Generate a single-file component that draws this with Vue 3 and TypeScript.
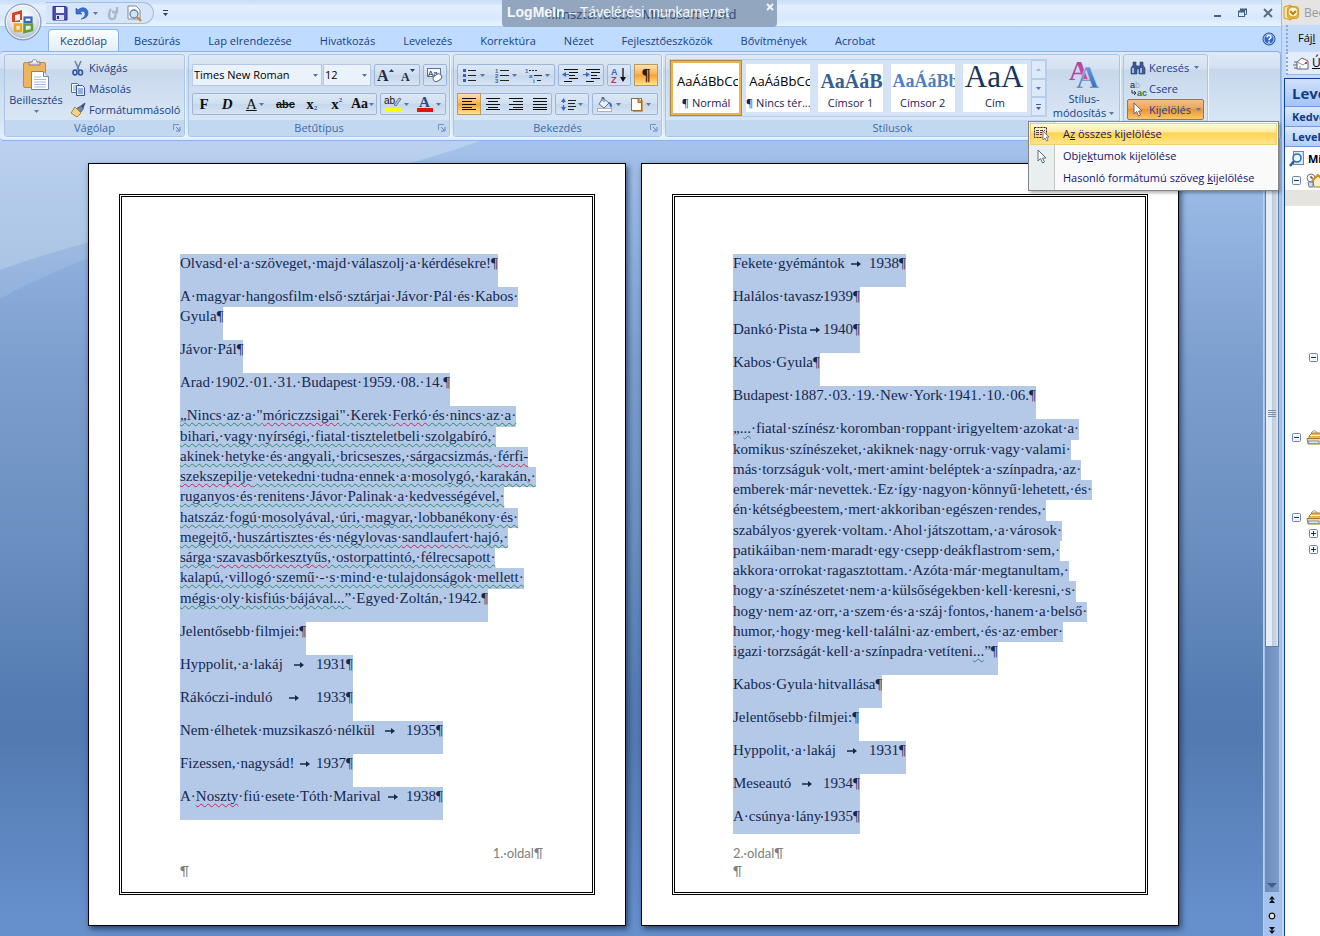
<script setup lang="ts">
import { h, ref } from 'vue'

interface Icon { w: number; h: number; body: string }

const navy = '#1e3f7a'
const serif = 'font-family="Liberation Serif" font-weight="bold"'
const sans = 'font-family="Liberation Sans"'

const icons: Record<string, Icon> = {
  office: { w: 38, h: 38, body: `<defs><radialGradient id="orb" cx=".5" cy=".35" r=".65"><stop offset="0" stop-color="#fff"/><stop offset=".6" stop-color="#dfe5ee"/><stop offset="1" stop-color="#a3b4cc"/></radialGradient></defs>
<circle cx="19" cy="19" r="18" fill="url(#orb)" stroke="#7f94b4"/><circle cx="19" cy="19" r="16.5" fill="none" stroke="#fff" stroke-opacity=".8"/>
<path d="M8 10 L18 7 V17 H16 V11 L11 12 V18 L16 17 V19 H8 Z" fill="#d5441c"/>
<rect x="20.5" y="14.5" width="7" height="4.500" fill="none" stroke="#2f6cc0" stroke-width="2.200"/>
<rect x="11" y="21.500" width="6" height="6.500" fill="none" stroke="#f0a820" stroke-width="2.600"/>
<path d="M20.500 21.500 H28 V27 L20.500 29 Z" fill="none" stroke="#5fa02e" stroke-width="2.600"/>` },
  save: { w: 16, h: 16, body: `<path d="M1 1.500h13l1 1V15H1z" fill="#4a4fb0" stroke="#2b2f86"/><rect x="4" y="2" width="8" height="6" fill="#eef2fb"/><rect x="4" y="10" width="8" height="5" fill="#d5dcec"/><rect x="5" y="11" width="2" height="3" fill="#2b2f86"/>` },
  undo: { w: 15, h: 15, body: `<path d="M2 2v6h6L6 6c3-2 6 0 5 3-.5 2-2 3-4 4 4-.5 7-2 7-6C14 2 8 0 4 4z" fill="#3c6fd0" stroke="#2450a8" stroke-width=".6"/>` },
  redo: { w: 15, h: 15, body: `<path d="M12 1v5H7M11 6l-1 6c-2 2-6 1-6-2 0-3 0-5 2-7" fill="none" stroke="#a9b8cc" stroke-width="2.400"/>` },
  preview: { w: 17, h: 17, body: `<path d="M2 1h8l4 4v9H2z" fill="#fff" stroke="#7d8ba3"/><circle cx="8" cy="9" r="4" fill="#cfe6f7" stroke="#6b7f99" stroke-width="1.300"/><path d="M11 12l4 4" stroke="#c98a3c" stroke-width="2.400"/>` },
  more: { w: 7, h: 8, body: `<path d="M1 1.500h5" stroke="${navy}"/><path d="M1 4h5L3.500 7z" fill="${navy}"/>` },
  caret: { w: 7, h: 5, body: `<path d="M1 1h5L3.500 4z" fill="#5b77a5"/>` },
  caretUp: { w: 7, h: 5, body: `<path d="M1 4h5L3.500 1z" fill="#a9b6cb"/>` },
  minimize: { w: 12, h: 12, body: `<path d="M2 9h7" stroke="#44617f" stroke-width="2"/>` },
  restore: { w: 12, h: 12, body: `<path d="M3.500 4V2.500h6v5H8" fill="none" stroke="#44617f"/><rect x="1.500" y="4.500" width="6" height="5" fill="none" stroke="#44617f"/><path d="M1 4.500h7M3 2.500h7" stroke="#44617f" stroke-width="2"/>` },
  close: { w: 12, h: 12, body: `<path d="M2 2l8 8M10 2l-8 8" stroke="#5a7089" stroke-width="2"/>` },
  smallClose: { w: 10, h: 10, body: `<path d="M2 2l6 6M8 2l-6 6" stroke="#eef3f8" stroke-width="2"/>` },
  help: { w: 14, h: 14, body: `<circle cx="7" cy="7" r="6" fill="#2f66cc" stroke="#1d4396"/><circle cx="7" cy="7" r="5" fill="none" stroke="#b9d2fb"/><path d="M5 5.500c0-2.500 4-2.500 4-.3C9 6.500 7 6.500 7 8.200M7 9.500v1.400" fill="none" stroke="#fff" stroke-width="1.500"/>` },
  paste: { w: 28, h: 32, body: `<rect x="1.500" y="3.500" width="22" height="25" rx="1.500" fill="#eeb55b" stroke="#c58a32"/><path d="M7 6V3h3c0-3 5-3 5 0h3v3z" fill="#d9dde4" stroke="#777f8c"/><rect x="11" y="1.500" width="3" height="2" fill="#fff"/><path d="M9.500 12.500h12l5 5V30.500h-17z" fill="#fff" stroke="#6f87b0"/><path d="M21.500 12.500v5h5" fill="#dbe6f6" stroke="#6f87b0"/><path d="M12 18h7M12 20.500h12M12 23h12M12 25.500h12M12 28h12" stroke="#a7bddd"/>` },
  cut: { w: 14, h: 16, body: `<path d="M4 1l4 9M10 1L6 10" stroke="#6d83a4" stroke-width="1.600"/><ellipse cx="4" cy="12.500" rx="2" ry="2.500" fill="none" stroke="#2c56a6" stroke-width="1.600"/><ellipse cx="9.500" cy="12.500" rx="2" ry="2.500" fill="none" stroke="#2c56a6" stroke-width="1.600"/>` },
  copy: { w: 16, h: 14, body: `<path d="M1.500 1.500h6l2 2v7h-8z" fill="#fff" stroke="#4c6fae"/><path d="M3 4h4M3 6h4M3 8h4" stroke="#7e9bd0"/><path d="M6.500 3.500h6l2 2v8h-8z" fill="#eaf2ff" stroke="#2f56a0"/><path d="M8 7h5M8 9h5M8 11h5" stroke="#4470c0"/>` },
  brush: { w: 16, h: 16, body: `<path d="M15 1l-4 3 2 2z" fill="#2c4f96" stroke="#2c4f96"/><path d="M11 4l2.500 2.500L10 11 6 7z" fill="#7b87a8" stroke="#46557d"/><path d="M5 5l6 6-4 4-6-4z" fill="#f3d487" stroke="#a8853d"/>` },
  grow: { w: 18, h: 16, body: `<text x="0" y="14" font-size="16" ${serif} fill="#222b3d">A</text><path d="M12 5h5L14.500 2z" fill="${navy}"/>` },
  shrink: { w: 18, h: 16, body: `<text x="2" y="14" font-size="12" ${serif} fill="#222b3d">A</text><path d="M11 2h5L13.500 5z" fill="${navy}"/>` },
  clear: { w: 18, h: 16, body: `<rect x="1.500" y="1.500" width="13" height="8" fill="#f4f7fc" stroke="#5c7299"/><text x="2" y="8.500" font-size="8" ${sans} fill="#223">Aa</text><rect x="7" y="8" width="9" height="6" rx="3" transform="rotate(-35 11 11)" fill="#fff" stroke="#65728a"/>` },
  highlight: { w: 18, h: 18, body: `<text x="0" y="9" font-size="10" ${sans} fill="#111">ab</text><path d="M15 3l2 1-5 7-2-1z" fill="#b7c2d6" stroke="#55627c" stroke-width=".8"/><rect x="1" y="13" width="16" height="4" fill="#ff0"/>` },
  fontColor: { w: 18, h: 18, body: `<text x="3" y="12" font-size="15" ${serif} fill="#2c4a86">A</text><rect x="1" y="13" width="16" height="4" fill="#e80f0f"/>` },
  bullets: { w: 16, h: 14, body: `<g fill="#3a5fb0"><rect x="1" y="1" width="3" height="3"/><rect x="1" y="6" width="3" height="3"/><rect x="1" y="11" width="3" height="3"/></g><path d="M6 2.500h8M6 7.500h8M6 12.500h8" stroke="#222"/>` },
  numbers: { w: 16, h: 15, body: `<g font-size="6" ${sans} font-weight="bold" fill="#3a5fb0"><text x="1" y="5">1</text><text x="1" y="10">2</text><text x="1" y="15">3</text></g><path d="M6 2.500h9M6 7.500h9M6 12.500h9" stroke="#222"/>` },
  multi: { w: 18, h: 15, body: `<g font-size="6" ${sans} font-weight="bold" fill="#3a5fb0"><text x="0" y="5">1</text><text x="4" y="10">a</text><text x="8" y="15">i</text></g><path d="M4 2.500h9" stroke="#222" stroke-dasharray="2 1"/><path d="M9 7.500h8M12 12.500h4" stroke="#222"/>` },
  outdent: { w: 18, h: 14, body: `<path d="M3 1.500h14M8 4.500h9M8 7.500h6M8 10.500h9M3 13.500h8" stroke="#111"/><path d="M5 4v5L1 6.500z" fill="#3a66c4"/><path d="M4 6.500h4" stroke="#3a66c4"/>` },
  indent: { w: 18, h: 14, body: `<path d="M3 1.500h14M8 4.500h9M8 7.500h6M8 10.500h9M3 13.500h8" stroke="#111"/><path d="M3 4v5l4-2.500z" fill="#3a66c4"/><path d="M0 6.500h4" stroke="#3a66c4"/>` },
  sort: { w: 18, h: 16, body: `<text x="1" y="8" font-size="9" ${sans} font-weight="bold" fill="#3a66b8">A</text><text x="1" y="16" font-size="9" ${sans} font-weight="bold" fill="#b03a4a">Z</text><path d="M13 1v11" stroke="#111" stroke-width="1.300"/><path d="M10 10h6l-3 5z" fill="#111"/>` },
  left: { w: 16, h: 14, body: `<path d="M1 1.500h14M1 4.500h10M1 7.500h14M1 10.500h10" stroke="#111"/><path d="M1 12.500h14" stroke="#111"/>` },
  center: { w: 16, h: 14, body: `<path d="M1 1.500h14M3 4.500h10M1 7.500h14M3 10.500h10M1 12.500h14" stroke="#111"/>` },
  right: { w: 16, h: 14, body: `<path d="M1 1.500h14M5 4.500h10M1 7.500h14M5 10.500h10M1 12.500h14" stroke="#111"/>` },
  justify: { w: 16, h: 14, body: `<path d="M1 1.500h14M1 4.500h14M1 7.500h14M1 10.500h14M1 12.500h14" stroke="#111"/>` },
  spacing: { w: 16, h: 15, body: `<path d="M3.500 3v9" stroke="#3a66c4" stroke-width="1.200" stroke-dasharray="3 2"/><path d="M1 5l2.500-4L6 5zM1 10l2.500 4L6 10z" fill="#3a66c4"/><path d="M8 3.500h8M8 6.500h7M8 9.500h8M8 12.500h6" stroke="#222"/>` },
  bucket: { w: 18, h: 16, body: `<path d="M7 2l6 5-5 5-5-4z" fill="#e9f0fa" stroke="#5b6f90"/><path d="M6 5V1.500h2V6" fill="none" stroke="#5b6f90"/><path d="M13 6c3 1 3 3 2.500 6-1.500-1-2-3-2.500-6" fill="#2f62bd"/><rect x="1.500" y="12.500" width="14" height="3" fill="#fff" stroke="#b9aeb5"/>` },
  borders: { w: 14, h: 15, body: `<rect x="1.500" y="1.500" width="10" height="12" fill="#fffdf8" stroke="#9a6a33"/><path d="M8 1.500l4 4h-4z" fill="#e8b76f" stroke="#9a6a33"/><path d="M12.500 3v11.500H3" fill="none" stroke="#d9963f"/>` },
  galleryMore: { w: 7, h: 8, body: `<path d="M1 1.500h5" stroke="#3f5f94"/><path d="M1 4h5L3.500 7z" fill="#3f5f94"/>` },
  changeStyles: { w: 34, h: 32, body: `<defs><linearGradient id="sa" x1="0" y1="0" x2="1" y2="1"><stop offset="0" stop-color="#8b3fb4"/><stop offset="1" stop-color="#ef4e8d"/></linearGradient><linearGradient id="sb" x1="0" y1="0" x2="0" y2="1"><stop offset="0" stop-color="#76a5e6"/><stop offset="1" stop-color="#2e62b4"/></linearGradient></defs><text x="2" y="20" font-size="28" ${serif} fill="url(#sa)">A</text><text x="9" y="28" font-size="32" ${serif} fill="url(#sb)" stroke="#dfeaf8" stroke-width=".4">A</text>` },
  find: { w: 16, h: 14, body: `<g fill="#3f5b93" stroke="#24407a" stroke-width=".6"><path d="M3 1h3v3l1 2v7H1V7l2-3z"/><path d="M10 1h3v3l2 3v6H9V6l1-2z"/><rect x="6" y="5" width="4" height="3"/></g><path d="M3 7v5M11 7v5" stroke="#dce8fb" stroke-width="1.300"/>` },
  replace: { w: 17, h: 16, body: `<text x="0" y="7" font-size="9" ${sans} fill="#111">a</text><text x="5" y="7" font-size="9" ${sans} fill="#9aa7bb">b</text><text x="7" y="15" font-size="9" ${sans} font-weight="bold" fill="#2c7a32">ac</text><path d="M2 9v3h3M4 10l2 2-2 2" fill="none" stroke="#333"/>` },
  pointer: { w: 12, h: 15, body: `<path d="M2 1v11l2.600-2.500L6.500 14l2-1-2-4H10z" fill="#fff" stroke="#5a6a88"/>` },
  selectAll: { w: 18, h: 16, body: `<rect x="1.500" y="1.500" width="12" height="10" fill="none" stroke="#222" stroke-dasharray="2 1"/><path d="M3 4.500h9M3 6.500h6M3 8.500h6" stroke="#444" stroke-dasharray="3 1"/><path d="M10 5v9l2-2 1.500 3 1.500-.6L13.500 11H16z" fill="#fff" stroke="#5a6a88" stroke-width=".8"/>` },
  launcher: { w: 9, h: 9, body: `<path d="M1.500 7V1.500H7" fill="none" stroke="#6f93c5"/><path d="M4 4l3 3M8 4v4H4" fill="none" stroke="#5f83b8"/>` },
  browseUp: { w: 8, h: 8, body: `<path d="M4 0L1 3.500h6zM4 3.500L1 7h6z" fill="#111"/>` },
  browseDown: { w: 8, h: 8, body: `<path d="M4 8L1 4.500h6zM4 4.500L1 1h6z" fill="#111"/>` },
  browse: { w: 8, h: 8, body: `<circle cx="4" cy="4" r="2.800" fill="#e8e6cf" stroke="#111" stroke-width="1.200"/>` },
  grip: { w: 9, h: 7, body: `<path d="M0 .5h8M0 2.500h8M0 4.500h8M0 6.500h8" stroke="#7b90b2"/>` },
  scrollDown: { w: 10, h: 6, body: `<path d="M0 0h10L5 5z" fill="#3d5f92"/>` },
  outlook: { w: 17, h: 17, body: `<path d="M1 3L8 1v15l-7-2z" fill="#fbe3a6" stroke="#d8962e"/><rect x="4.500" y="2.500" width="11" height="12" rx="3" fill="#f0b93c" stroke="#cf9a2c"/><circle cx="10" cy="8" r="5" fill="#fff4d2" stroke="#d59a26"/><path d="M7 7l3 3 3-3" fill="none" stroke="#c47c14" stroke-width="2"/>` },
  mail: { w: 16, h: 15, body: `<path d="M4 6l5-4 6 3v8H4z" fill="#fff" stroke="#5c6270"/><path d="M4 6l6 3 5-4M7 10v3" fill="none" stroke="#8d93a0"/><path d="M1 6h3M0 9h4M1 12h3" stroke="#5c6270"/><rect x="12" y="6" width="2" height="2" fill="#d33"/>` },
  searchFolder: { w: 16, h: 16, body: `<rect x="4.500" y=".5" width="10" height="13" fill="#dcebfb" stroke="#6885b5"/><circle cx="8" cy="7" r="4" fill="#eaf8ff" stroke="#2d70b0" stroke-width="1.600"/><path d="M5 10l-4 5" stroke="#2d5a92" stroke-width="2.400"/>` },
  home: { w: 18, h: 15, body: `<circle cx="5" cy="5" r="4" fill="#f4f4f0" stroke="#777"/><path d="M5 3v2h2" stroke="#333" fill="none"/><path d="M7 8l5-5 5 5v6H8z" fill="#fff0c8" stroke="#a87b29"/><path d="M6 8l6-6 6 6" fill="none" stroke="#d98c1e" stroke-width="2"/><path d="M2 9h5v5H3z" fill="#cfdcf0" stroke="#6a7fa8"/>` },
  folders: { w: 17, h: 15, body: `<path d="M5 3c2-3 5-3 6 0" fill="none" stroke="#8a8f98"/><path d="M3 6l3-3h9l3 3v5H3z" fill="#e9b64c" stroke="#a67b35"/><path d="M4 5.500h12" stroke="#fff3c9"/><path d="M1 8.500h12l4-3v5l-3 3.500H2z" fill="#f6d88a" stroke="#a67b35"/><path d="M2 11h11v2.500H3z" fill="#dbe6f6" stroke="#7e94bd"/>` },
  minus: { w: 9, h: 9, body: `<rect x=".5" y=".5" width="8" height="8" rx="1" fill="#f2f6fb" stroke="#6c86b4"/><path d="M2 4.500h5" stroke="#234"/>` },
  plus: { w: 9, h: 9, body: `<rect x=".5" y=".5" width="8" height="8" rx="1" fill="#f2f6fb" stroke="#6c86b4"/><path d="M2 4.500h5M4.500 2v5" stroke="#234"/>` },
  tab: { w: 11, h: 8, body: `<path d="M0 4h7" stroke="#14284e" stroke-width="1.500"/><path d="M6 1l4 3-4 3z" fill="#14284e"/>` },
}

const Ico = (props: { n: string }) => {
  const i = icons[props.n]
  return h('svg', { width: i.w, height: i.h, viewBox: `0 0 ${i.w} ${i.h}`, 'aria-hidden': 'true', innerHTML: i.body, style: { display: 'block', flex: 'none' } })
}
Ico.props = ['n']

const tabs = ['Kezdőlap', 'Beszúrás', 'Lap elrendezése', 'Hivatkozás', 'Levelezés', 'Korrektúra', 'Nézet', 'Fejlesztőeszközök', 'Bővítmények', 'Acrobat']
const activeTab = ref('Kezdőlap')

const styles = [
  { sample: 'AaÁáBbCc', name: '¶ Normál', kind: 'body' },
  { sample: 'AaÁáBbCc', name: '¶ Nincs tér...', kind: 'body' },
  { sample: 'AaÁáBb', name: 'Címsor 1', kind: 'h1' },
  { sample: 'AaÁáBb', name: 'Címsor 2', kind: 'h2' },
  { sample: 'AaA', name: 'Cím', kind: 'title' },
]
const activeStyle = ref(0)

const fontName = ref('Times New Roman')
const fontSize = ref('12')

/* A line is plain text; ~g…~ marks a grammar squiggle, ~r…~ a spelling one. */
interface Para { lines?: string[]; name?: string; year?: string; stop?: 'near' | 'mid' | 'far'; clipped?: boolean }

const pages: { body: Para[]; footer: string; side: string }[] = [
  {
    side: 'end',
    footer: '1. oldal¶',
    body: [
      { lines: ['Olvasd el a szöveget, majd válaszolj a kérdésekre!¶'] },
      { lines: ['A magyar hangosfilm első sztárjai Jávor Pál és Kabos ', 'Gyula¶'] },
      { lines: ['Jávor Pál¶'] },
      { lines: ['Arad 1902. 01. 31. Budapest 1959. 08. 14.¶'] },
      {
        lines: [
          '~g„Nincs az a "~rmóriczzsigai~g" Kerek ~rFerkó~g és nincs az a ~',
          '~gbihari, vagy nyírségi, fiatal tiszteletbeli szolgabíró, ~',
          '~gakinek hetyke és angyali, bricseszes, sárgacsizmás, ~rférfi-~',
          '~rszekszepilje~g vetekedni tudna ennek a mosolygó, karakán, ~',
          '~gruganyos és renitens Jávor Palinak a kedvességével, ~',
          '~ghatszáz fogú mosolyával, úri, magyar, lobbanékony és ~',
          '~gmegejtő, huszártisztes és négylovas ~rsandlaufert~g hajó, ~',
          '~gsárga ~rszavasbőrkesztyűs~g, ostorpattintó, félrecsapott ~',
          '~gkalapú, villogó szemű - s mind e tulajdonságok mellett ~',
          '~gmégis oly kisfiús bájával...”~n Egyed Zoltán, 1942.¶',
        ],
      },
      { lines: ['Jelentősebb filmjei:¶'] },
      { name: 'Hyppolit, a lakáj', year: '1931¶', stop: 'mid' },
      { name: 'Rákóczi-induló', year: '1933¶', stop: 'mid' },
      { name: 'Nem élhetek muzsikaszó nélkül', year: '1935¶', stop: 'far' },
      { name: 'Fizessen, nagysád!', year: '1937¶', stop: 'mid' },
      { name: 'A ~rNoszty~n fiú esete Tóth Marival', year: '1938¶', stop: 'far' },
    ],
  },
  {
    side: 'start',
    footer: '2. oldal¶',
    body: [
      { name: 'Fekete gyémántok', year: '1938¶', stop: 'mid' },
      { name: 'Halálos tavasz', year: '1939¶', stop: 'near' },
      { name: 'Dankó Pista', year: '1940¶', stop: 'near' },
      { lines: ['Kabos Gyula¶'] },
      { lines: ['Budapest 1887. 03. 19. New York 1941. 10. 06.¶'] },
      {
        lines: [
          '„.~g..~n fiatal színész koromban roppant irigyeltem azokat a ',
          'komikus színészeket, akiknek nagy orruk vagy valami ',
          'más torzságuk volt, mert amint beléptek a színpadra, az ',
          'emberek már nevettek. Ez így nagyon könnyű lehetett, és ',
          'én kétségbeestem, mert akkoriban egészen rendes, ',
          'szabályos gyerek voltam. Ahol játszottam, a városok ',
          'patikáiban nem maradt egy csepp deákflastrom sem, ',
          'akkora orrokat ragasztottam. Azóta már megtanultam, ',
          'hogy a színészetet nem a külsőségekben kell keresni, s ',
          'hogy nem az orr, a szem és a száj fontos, hanem a belső ',
          'humor, hogy meg kell találni az embert, és az ember ',
          'igazi torzságát kell a színpadra vetíteni~g...~n”¶',
        ],
      },
      { lines: ['Kabos Gyula hitvallása¶'] },
      { lines: ['Jelentősebb filmjei:¶'] },
      { name: 'Hyppolit, a lakáj', year: '1931¶', stop: 'mid' },
      { name: 'Meseautó', year: '1934¶', stop: 'near' },
      { name: 'A csúnya lány', year: '1935¶', stop: 'near', clipped: true },
    ],
  },
]

function runs(line: string): { text: string; kind: string }[] {
  return line
    .split('~')
    .map((part, i) => (i === 0 ? { text: part, kind: 'n' } : { text: part.slice(1), kind: part.charAt(0) }))
    .filter((r) => r.text)
    .map((r) => ({ ...r, text: r.text.replace(/ /g, '·') }))
}
</script>

<template>
  <div class="desktop">
    <main class="word">
      <header class="titlebar">
        <button class="orb" aria-label="Office"><Ico n="office" /></button>
        <div class="quick">
          <button aria-label="Mentés"><Ico n="save" /></button>
          <button aria-label="Visszavonás"><Ico n="undo" /><Ico n="caret" /></button>
          <button aria-label="Ismétlés"><Ico n="redo" /></button>
          <button aria-label="Nyomtatási kép"><Ico n="preview" /></button>
        </div>
        <button class="quick-more" aria-label="Testreszabás"><Ico n="more" /></button>
        <div class="window-buttons">
          <button aria-label="Kis méret"><Ico n="minimize" /></button>
          <button aria-label="Előző méret"><Ico n="restore" /></button>
          <button aria-label="Bezárás"><Ico n="close" /></button>
        </div>
        <div class="remote">
          <span class="doc-title">filmsztár.docx - Microsoft Word</span>
          <span class="remote-title"><b>LogMeIn</b> – Távelérési munkamenet</span>
          <button class="remote-close" aria-label="Bezárás"><Ico n="smallClose" /></button>
        </div>
      </header>

      <nav class="tabs">
        <button v-for="t in tabs" :key="t" :class="['tab', { active: t === activeTab }]" @click="activeTab = t">{{ t }}</button>
        <button class="help" aria-label="Súgó"><Ico n="help" /></button>
      </nav>

      <section class="ribbon">
        <div class="group clip">
          <div class="content">
            <button class="big"><Ico n="paste" /><span>Beillesztés</span><Ico n="caret" /></button>
            <div class="stack">
              <button class="item"><i><Ico n="cut" /></i>Kivágás</button>
              <button class="item"><i><Ico n="copy" /></i>Másolás</button>
              <button class="item"><i><Ico n="brush" /></i>Formátummásoló</button>
            </div>
          </div>
          <footer class="label">Vágólap<button aria-label="Vágólap ablak"><Ico n="launcher" /></button></footer>
        </div>

        <div class="group font">
          <div class="content rows">
            <div class="row">
              <div class="combos">
                <label class="combo wide"><select v-model="fontName" aria-label="Betűtípus"><option>Times New Roman</option></select><Ico n="caret" /></label>
                <label class="combo"><select v-model="fontSize" aria-label="Betűméret"><option>12</option></select><Ico n="caret" /></label>
              </div>
              <div class="box fill"><button aria-label="Betűméret növelése"><Ico n="grow" /></button><button aria-label="Betűméret csökkentése"><Ico n="shrink" /></button></div>
              <div class="box"><button aria-label="Formázás törlése"><Ico n="clear" /></button></div>
            </div>
            <div class="row">
              <div class="box fill letters">
                <button><b>F</b></button><button><b><em>D</em></b></button><button class="drop"><u>A</u><Ico n="caret" /></button>
                <button class="strike"><s>abc</s></button><button class="x">x<sub>2</sub></button><button class="x">x<sup>2</sup></button>
                <button class="aa">Aa<Ico n="caret" /></button>
              </div>
              <div class="box">
                <button class="drop" aria-label="Kiemelés"><Ico n="highlight" /><Ico n="caret" /></button>
                <button class="drop" aria-label="Betűszín"><Ico n="fontColor" /><Ico n="caret" /></button>
              </div>
            </div>
          </div>
          <footer class="label">Betűtípus<button aria-label="Betűtípus ablak"><Ico n="launcher" /></button></footer>
        </div>

        <div class="group para">
          <div class="content rows">
            <div class="row">
              <div class="box fill">
                <button class="drop" aria-label="Felsorolás"><Ico n="bullets" /><Ico n="caret" /></button>
                <button class="drop" aria-label="Számozás"><Ico n="numbers" /><Ico n="caret" /></button>
                <button class="drop" aria-label="Többszintű lista"><Ico n="multi" /><Ico n="caret" /></button>
              </div>
              <div class="box"><button aria-label="Behúzás csökkentése"><Ico n="outdent" /></button><button aria-label="Behúzás növelése"><Ico n="indent" /></button></div>
              <div class="box"><button aria-label="Rendezés"><Ico n="sort" /></button></div>
              <div class="box"><button class="on pilcrow">¶</button></div>
            </div>
            <div class="row">
              <div class="box fill">
                <button class="on" aria-label="Balra"><Ico n="left" /></button><button aria-label="Középre"><Ico n="center" /></button>
                <button aria-label="Jobbra"><Ico n="right" /></button><button aria-label="Sorkizárt"><Ico n="justify" /></button>
              </div>
              <div class="box"><button class="drop" aria-label="Sorköz"><Ico n="spacing" /><Ico n="caret" /></button></div>
              <div class="box">
                <button class="drop" aria-label="Árnyékolás"><Ico n="bucket" /><Ico n="caret" /></button>
                <button class="drop" aria-label="Szegélyek"><Ico n="borders" /><Ico n="caret" /></button>
              </div>
            </div>
          </div>
          <footer class="label">Bekezdés<button aria-label="Bekezdés ablak"><Ico n="launcher" /></button></footer>
        </div>

        <div class="group styles">
          <div class="content">
            <div class="gallery">
              <button v-for="(s, i) in styles" :key="s.name" :class="['style', { chosen: i === activeStyle }]" @click="activeStyle = i">
                <span :class="['sample', s.kind]">{{ s.sample }}</span><span class="style-name">{{ s.name }}</span>
              </button>
              <div class="gallery-scroll">
                <button aria-label="Előző"><Ico n="caretUp" /></button>
                <button aria-label="Következő"><Ico n="caret" /></button>
                <button aria-label="Továbbiak"><Ico n="galleryMore" /></button>
              </div>
            </div>
            <button class="big change"><Ico n="changeStyles" /><span>Stílus-</span><span class="second">módosítás<Ico n="caret" /></span></button>
          </div>
          <footer class="label">Stílusok</footer>
        </div>

        <div class="group edit">
          <div class="content">
            <div class="stack">
              <button class="item"><i><Ico n="find" /></i>Keresés<Ico n="caret" /></button>
              <button class="item"><i><Ico n="replace" /></i>Csere</button>
              <button class="item pressed"><i><Ico n="pointer" /></i>Kijelölés<Ico n="caret" /></button>
            </div>
          </div>
          <footer class="label"></footer>
        </div>

        <div class="menu" role="menu">
          <button role="menuitem" class="hot"><i><Ico n="selectAll" /></i><span>A<u>z</u> összes kijelölése</span></button>
          <button role="menuitem"><i><Ico n="pointer" /></i><span>Obje<u>k</u>tumok kijelölése</span></button>
          <button role="menuitem"><i></i><span>Hasonló formátumú szöveg <u>k</u>ijelölése</span></button>
        </div>
      </section>

      <section class="workspace">
        <div class="canvas">
          <svg class="swoosh" width="480" height="170" viewBox="0 0 480 170" aria-hidden="true">
            <defs>
              <linearGradient id="sheen" x1="0" y1="0" x2="0" y2="1"><stop offset="0" stop-color="#fff" stop-opacity=".16" /><stop offset="1" stop-color="#fff" stop-opacity=".2" /></linearGradient>
            </defs>
            <path d="M0 0H480C340 50 140 78 0 129z" fill="url(#sheen)" />
            <path d="M0 0H480C340 50 130 84 0 158z" fill="#fff" fill-opacity=".1" />
          </svg>
          <article v-for="(page, pi) in pages" :key="pi" class="page">
            <div class="frame">
              <p v-for="(p, i) in page.body" :key="i" :class="{ clipped: p.clipped, long: (p.lines?.length ?? 0) > 2 }">
                <template v-if="p.lines">
                  <span v-for="(l, li) in p.lines" :key="li" class="line"><span v-for="(r, ri) in runs(l)" :key="ri" :class="r.kind">{{ r.text }}</span></span>
                </template>
                <span v-else class="line tabbed">
                  <span :class="['stop', p.stop]"><span class="film"><span v-for="(r, ri) in runs(p.name ?? '')" :key="ri" :class="r.kind">{{ r.text }}</span></span><span class="arrow"><Ico n="tab" /></span></span>{{ p.year }}
                </span>
              </p>
              <footer :class="['page-foot', page.side]"><span>{{ page.footer.replace(' ', '·') }}</span><span class="mark">¶</span></footer>
            </div>
          </article>
        </div>
        <div class="scrollbar">
          <div class="track">
            <div class="thumb"><Ico n="grip" /></div>
            <button aria-label="Le"><Ico n="scrollDown" /></button>
          </div>
          <button aria-label="Előző oldal"><Ico n="browseUp" /></button>
          <button aria-label="Tallózás"><Ico n="browse" /></button>
          <button aria-label="Következő oldal"><Ico n="browseDown" /></button>
        </div>
      </section>
    </main>

    <aside class="outlook">
      <div class="o-title"><Ico n="outlook" />Bee</div>
      <div class="o-menu"><button>Fáj<u>l</u></button></div>
      <div class="o-tools"><button><Ico n="mail" /><u>Ú</u></button></div>
      <div class="o-panel">
        <h2>Leve</h2>
        <h3>Kedve</h3>
        <h3>Levele</h3>
        <div class="o-search"><Ico n="searchFolder" />Mi</div>
        <ul class="tree">
          <li><Ico n="minus" /><Ico n="home" /></li>
          <li class="selected"></li>
          <li class="child far-down"><Ico n="minus" /></li>
          <li class="spaced"><Ico n="minus" /><Ico n="folders" /></li>
          <li class="spaced"><Ico n="minus" /><Ico n="folders" /></li>
          <li class="child"><Ico n="plus" /></li>
          <li class="child"><Ico n="plus" /></li>
        </ul>
      </div>
    </aside>
  </div>
</template>

<style>
body { margin: 0; background: #6690cc; }
</style>

<style scoped>
* { box-sizing: border-box; }
button { font: inherit; color: inherit; background: none; border: 0; padding: 0; margin: 0; display: flex; align-items: center; justify-content: center; white-space: nowrap; }
i { font-style: normal; }

.desktop { display: flex; min-height: 100vh; overflow: hidden; font: 11px/16px "Open Sans", "Noto Sans", sans-serif; color: #15428b; }
.word { flex: 1; min-width: 0; display: flex; flex-direction: column; background: #bfdbff; }

.titlebar { position: relative; z-index: 2; height: 27px; display: flex; align-items: center; background: linear-gradient(#c9dff8 0, #d3e5fa 4px, #e3effd 5px, #d8e8fb 18px, #e8f3ff 26px); border-bottom: 1px solid #b5cdec; }
.orb { align-self: flex-start; margin: 3px 0 0 4px; flex: none; }
.quick { height: 22px; margin-left: 4px; padding: 0 10px 0 6px; display: flex; align-items: center; gap: 6px; border: 1px solid #a3bde0; border-left: 0; border-radius: 0 11px 11px 0; background: #d6e5f8; }
.quick button { gap: 3px; }
.quick-more { margin-left: 8px; }
.window-buttons { margin-left: auto; display: flex; gap: 13px; padding-right: 7px; }
.remote { position: absolute; left: 502px; top: 0; width: 275px; height: 27px; border-radius: 0 0 4px 4px; background: #92a7bf; }
.doc-title { position: absolute; left: 45px; top: 5px; font-size: 13px; line-height: 18px; color: #2f4c74; white-space: nowrap; }
.remote-title { position: absolute; left: 5px; top: 3px; font: 14px/18px "Liberation Sans", sans-serif; color: #f2f6fa; white-space: nowrap; }
.remote-close { position: absolute; right: 2px; top: 2px; }

.tabs { height: 24px; display: flex; align-items: flex-end; padding: 0 5px 0 48px; gap: 2px; }
.tab { height: 22px; padding: 0 12px; border: 1px solid transparent; border-bottom: 0; border-radius: 4px 4px 0 0; }
.tab.active { padding: 0 11px; background: linear-gradient(#fbfdff, #e4eefa); border-color: #8db2e3; }
.help { margin: 0 0 5px auto; }

.ribbon { position: relative; z-index: 1; height: 90px; padding: 2px 4px 3px; display: flex; gap: 3px; border: 1px solid #8db2e3; border-left: 0; border-radius: 4px; background: linear-gradient(#dde9f7 0, #d3e1f2 16px, #c6d7ec 17px, #d8e7f6 72px, #e6f1fc 86px); box-shadow: inset 0 -2px #d9f0fd; }
.group { flex: none; display: flex; flex-direction: column; border: 1px solid #a9c5e6; border-radius: 3px; background: linear-gradient(#dfe9f5 0, #d5e1f0 14px, #c8d8ec 15px, #dae7f5 68px); box-shadow: 1px 1px #eef6fd; }
.content { flex: 1; display: flex; min-height: 0; }
.label { position: relative; height: 16px; line-height: 15px; text-align: center; color: #3e6aaa; background: #c1d8f0; border-radius: 0 0 3px 3px; }
.label button { position: absolute; right: 3px; top: 3px; }
.clip { width: 181px; }
.font { width: 262px; }
.para { width: 209px; }
.styles { width: 455px; }
.edit { width: 85px; }

.big { flex: none; flex-direction: column; justify-content: flex-start; width: 62px; padding-top: 4px; gap: 2px; }
.big span { line-height: 14px; }
.stack { flex: 1; min-width: 0; display: flex; flex-direction: column; padding-top: 2px; }
.item { height: 22px; justify-content: flex-start; gap: 2px; padding: 0 3px; border: 1px solid transparent; border-radius: 2px; }
.item i { width: 18px; display: flex; justify-content: center; }
.item > svg { margin-left: 2px; }
.clip .item { padding: 0 1px; }
.pressed { border-color: #8e7a58; background: linear-gradient(#f3c088, #f2a450 45%, #f0932c 50%, #fbc66b); }
.edit .stack { padding-left: 3px; padding-right: 3px; }
.edit .item { padding: 0 1px; }

.rows { flex-direction: column; gap: 7px; padding: 9px 3px 0; }
.row { display: flex; gap: 3px; height: 22px; }
.box { display: flex; border: 1px solid #9cb6d9; border-radius: 2px; background: linear-gradient(#dde8f5, #cfdef0 50%, #c5d7ec 51%, #d6e4f4); }
.box button { width: 22px; height: 20px; }
.box .drop { width: 32px; gap: 1px; }
.fill { flex: 1; justify-content: space-between; }
.on { background: linear-gradient(#fce0b0, #f9b455 45%, #f7a233 50%, #fde38e); box-shadow: 0 0 0 1px #b99a63; }
.box .pilcrow { font: bold 17px/20px "Liberation Serif", serif; color: #2b1c10; }
.combos { display: flex; gap: 1px; }
.combo { position: relative; width: 48px; display: flex; align-items: center; justify-content: flex-end; padding-right: 2px; border: 1px solid #b3c9e6; background: #eaf2fb; }
.combo.wide { width: 130px; }
.combo select { position: absolute; inset: 0; width: 100%; padding: 0 1px; border: 0; background: none; appearance: none; font: inherit; color: #000; }
.combo svg { position: relative; pointer-events: none; }
.letters { font: 15px/20px "Liberation Serif", serif; color: #111; }
.letters .strike { width: 26px; font: bold 11px/20px "Liberation Sans", sans-serif; }
.letters .x { width: 24px; font-weight: bold; align-items: center; }
.letters .aa { width: 26px; font-weight: bold; font-size: 14px; }
.letters sub, .letters sup { font-size: 7px; line-height: 7px; color: #2c56b0; }
.letters sub { align-self: flex-end; padding-bottom: 2px; }
.letters sup { align-self: flex-start; padding-top: 3px; }

.gallery { min-width: 0; margin: 4px 2px 3px 3px; display: flex; flex: 1; border: 1px solid #b9d0ed; background: #d4e4f6; }
.style { flex: 1; min-width: 0; border: 4px solid transparent; flex-direction: column; justify-content: flex-start; background: #fff; background-clip: padding-box; overflow: hidden; color: #1e1a5c; }
.style.chosen { border: 3px solid #f0b24a; outline: 1px solid #a8894c; outline-offset: -1px; padding: 1px; }
.sample { width: 100%; height: 31px; padding-left: 3px; line-height: 34px; text-align: left; overflow: hidden; color: #000; font-size: 13px; }
.style-name { line-height: 16px; }
.h1 { font: bold 20px/34px "Liberation Serif", serif; color: #365f91; padding-left: 2px; }
.h2 { font: bold 18px/34px "Liberation Serif", serif; color: #4f81bd; padding-left: 2px; }
.title { font: 31px/26px "Liberation Serif", serif; color: #17365d; padding-left: 2px; }
.gallery-scroll { width: 15px; display: flex; flex-direction: column; }
.gallery-scroll button { flex: 1; border: 1px solid #b6cde9; background: #dce9f8; }
.change { width: 70px; padding-top: 5px; gap: 0; }
.second { display: flex; align-items: center; gap: 2px; }

.menu { position: absolute; right: 1px; top: 69px; width: 251px; border: 1px solid #868686; background: linear-gradient(90deg, #e9eeee 25px, #c5c5c5 25px, #c5c5c5 26px, #fafafa 26px); box-shadow: 2px 2px 3px rgba(0, 0, 0, .3); padding: 1px; color: #15136b; }
.menu button { width: 100%; height: 22px; justify-content: flex-start; border: 1px solid transparent; }
.menu i { width: 22px; display: flex; justify-content: center; margin-right: 10px; }
.menu .hot { border-color: #f0cf6c; background: linear-gradient(#fffbe0, #ffe9a0 40%, #ffd34e 45%, #ffe48f); }

.workspace { flex: 1; display: flex; background: linear-gradient(#a4c2ea 0, #91b2df 100px, #7d9fcf 220px, #6a8fc0 400px, #557cb2 560px, #547bb1 600px, #6690cc 780px); }
.canvas { position: relative; flex: 1; min-width: 0; display: flex; justify-content: center; align-items: flex-start; gap: 15px; padding: 22px 0 10px 4px; }
.swoosh { position: absolute; left: 0; top: 0; }
.page { position: relative; flex: 0 1 538px; min-height: 763px; display: flex; padding: 30px; background: #fff; border: 1px solid #000; box-shadow: 2px 3px 6px rgba(20, 40, 80, .75); }
.frame { flex: 1; min-width: 0; display: flex; flex-direction: column; padding: 57px 49px 12px 58px; border: 3px double #000; font: 15px/19px "Liberation Serif", serif; color: #14284e; white-space: nowrap; }
p { margin: 0; }
.line { display: block; width: fit-content; height: 20px; background: #b4c8e8; }
.long .line:nth-child(4n+1) { height: 21px; }
.line:last-child { height: 33px; }
.clipped .line:last-child { height: 27px; }
.g, .r { text-decoration: underline wavy #2c8a6a 1px; text-underline-offset: 2px; text-decoration-skip-ink: none; }
.r { text-decoration-color: #c02a5a; }
.tabbed { display: flex; }
.stop { display: flex; }
.near { width: 90px; }
.mid { width: 136px; }
.far { width: 226px; }
.film { flex: none; }
.arrow { flex: 1; min-width: 0; display: flex; justify-content: center; height: 20px; align-items: center; overflow: hidden; }
.page-foot { margin-top: auto; display: flex; flex-direction: column; font: 13px/18px Lato, sans-serif; color: #808080; }
.page-foot.end span { align-self: flex-end; }
.page-foot .mark.mark { align-self: flex-start; }

.scrollbar { width: 18px; display: flex; flex-direction: column; background: #a5c3ee; border-left: 1px solid #b5d3f8; padding: 0 2px 0 1px; }
.track { flex: 1; display: flex; flex-direction: column; background: linear-gradient(90deg, #6a8bbb, #7f9dc8); }
.thumb { height: 506px; display: flex; align-items: center; justify-content: center; padding-top: 40px; border: 1px solid #5f7fae; border-top: 0; background: linear-gradient(90deg, #e7edf5 50%, #bccbdd 51%, #c9d6e6 80%, #dce5f0); }
.track button { margin-top: auto; height: 12px; }
.scrollbar > button { height: 16px; }
.scrollbar > button:last-child { height: 12px; }

.outlook { width: 39px; flex: none; display: flex; flex-direction: column; overflow: hidden; white-space: nowrap; background: #c3dafb; color: #000; border-left: 1px solid #9dbcf0; }
.o-title { height: 25px; display: flex; align-items: center; gap: 4px; padding-left: 1px; background: #e3e4e3; color: #9b9b9b; font-size: 12px; }
.o-menu { height: 26px; display: flex; align-items: center; margin-left: 4px; padding-left: 10px; border-left: 2px dotted #8aa8d8; }
.o-tools { height: 23px; display: flex; margin: 1px 0 3px 4px; padding-left: 5px; border-left: 2px dotted #8aa8d8; background: #e2ecfb; border-bottom: 1px solid #9cb6de; font-size: 12px; }
.o-tools button { gap: 3px; }
.o-panel { flex: 1; margin-left: 2px; border: solid #0f3f96; border-width: 1px 0 0 1px; background: #fff; font-weight: bold; }
h2, h3 { margin: 0; padding-left: 7px; color: #123b85; background: linear-gradient(#dbe9fd, #b2cef7); border-bottom: 1px solid #6f9ae0; }
h2 { height: 28px; font-size: 15px; line-height: 28px; background: linear-gradient(#cfe1fc, #a4c4f4); }
h3 { height: 20px; font-size: 11px; line-height: 19px; }
.o-search { height: 24px; display: flex; align-items: center; gap: 3px; padding-left: 4px; }
.tree { list-style: none; margin: 0; padding: 0; }
.tree li { height: 16px; display: flex; align-items: center; gap: 5px; padding-left: 7px; }
.tree li:first-child { height: 19px; }
.tree .selected { background: #e6e4df; }
.tree .child { padding-left: 24px; }
.tree .far-down { margin-top: 143px; }
.tree .spaced { margin-top: 64px; }
</style>
